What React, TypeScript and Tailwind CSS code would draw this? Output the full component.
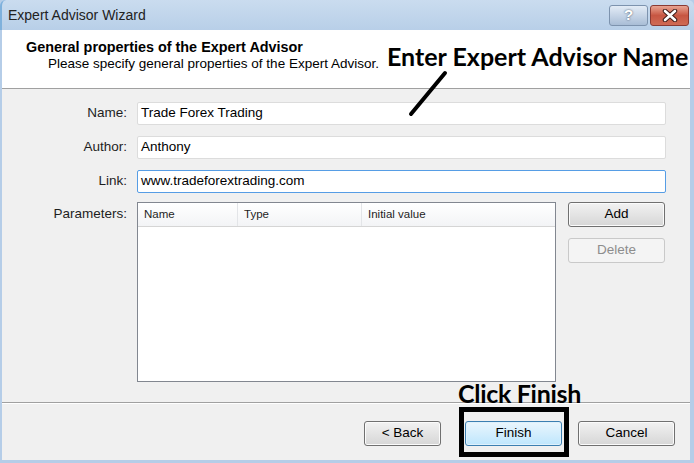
import React from "react";

const fieldRows = [
  { label: "Name:", value: "Trade Forex Trading", focused: false },
  { label: "Author:", value: "Anthony", focused: false },
  { label: "Link:", value: "www.tradeforextrading.com", focused: true },
];

const WinButton = ({
  children,
  width,
  primary,
  disabled,
}: {
  children: React.ReactNode;
  width: string;
  primary?: boolean;
  disabled?: boolean;
}) => {
  const base =
    "h-[25px] rounded-[3px] border flex items-center justify-center text-[13.5px] ";
  const look = disabled
    ? "border-[#c9c9c9] bg-[#f4f4f4] text-[#8d8d8d]"
    : primary
      ? "border-[#3c7fb1] bg-gradient-to-b from-[#eaf6fd] to-[#bee6fd] text-black shadow-[inset_0_0_0_1px_#dff1fc]"
      : "border-[#707070] bg-gradient-to-b from-[#f2f2f2] to-[#d6d6d6] text-black shadow-[inset_0_0_0_1px_#fbfbfb]";
  return <div className={base + width + " " + look}>{children}</div>;
};

const App = () => {
  return (
    <div className="relative w-[694px] h-[463px] bg-[#b5cde8] font-['Liberation_Sans',Arial,sans-serif] overflow-hidden flex flex-col">
      {/* title bar */}
      <div className="h-[30px] flex items-center justify-between pl-[6px] pr-[5px] bg-gradient-to-b from-[#cadcef] to-[#b8cfe8] rounded-t-[6px] border-l-2 border-[#7fb1dc]">
        <span className="text-[14px] text-[#222222]">Expert Advisor Wizard</span>
        <div className="flex gap-[2px] self-start mt-[5px]">
          <div className="w-[39px] h-[21px] rounded-[3px] border border-[#7d93ae] bg-gradient-to-b from-[#e3ecf6] to-[#a9bdd6] flex items-center justify-center text-white font-bold text-[15px] [text-shadow:0_0_2px_#3a4a5e]">
            ?
          </div>
          <div className="w-[39px] h-[21px] rounded-[3px] border border-[#8a3a33] bg-gradient-to-b from-[#e8a493] via-[#c75642] to-[#cf6a55] flex items-center justify-center">
            <svg width="16" height="13" viewBox="0 0 16 13">
              <path
                d="M3 2 L13 11 M13 2 L3 11"
                stroke="#3b1a16"
                strokeWidth="4.5"
                strokeLinecap="round"
              />
              <path
                d="M3 2 L13 11 M13 2 L3 11"
                stroke="#ffffff"
                strokeWidth="2.6"
                strokeLinecap="round"
              />
            </svg>
          </div>
        </div>
      </div>

      {/* client area */}
      <div className="flex-1 flex flex-col ml-[2px] mr-[4px] mb-[3px] bg-[#f0f0f0] text-[13.5px] text-black">
        {/* header */}
        <div className="h-[59px] bg-white border-b border-[#a0a0a0] pl-[24px] pt-[9px]">
          <div className="font-bold text-[14.4px] leading-[17px]">General properties of the Expert Advisor</div>
          <div className="pl-[22px] leading-[16px]">Please specify general properties of the Expert Advisor.</div>
        </div>

        {/* form */}
        <div className="flex-1 flex flex-col pt-[13px] pr-[24px]">
          {fieldRows.map((row, i) => (
            <div key={row.label} className={"flex items-center " + (i === 0 ? "" : "mt-[11px]")}>
              <div className="w-[125px] text-right text-[#1e1e1e]">{row.label}</div>
              <div
                className={
                  "ml-[10px] flex-1 h-[23px] bg-white border rounded-[2px] flex items-center px-[3px] " +
                  (row.focused ? "border-[#569de5]" : "border-[#dcdcdc]")
                }
              >
                {row.value}
              </div>
            </div>
          ))}

          <div className="flex mt-[9px]">
            <div className="w-[125px] text-right text-[#1e1e1e] pt-[2px]">Parameters:</div>
            <div className="ml-[10px] w-[419px] h-[180px] bg-white border border-[#828790] flex flex-col">
              <div className="h-[24px] flex bg-gradient-to-b from-white to-[#f3f4f6] border-b border-[#d5d5d5] text-[11.5px] text-[#1e1e1e]">
                <div className="w-[100px] border-r border-[#e3e5e8] pl-[6px] flex items-center">Name</div>
                <div className="w-[124px] border-r border-[#e3e5e8] pl-[6px] flex items-center">Type</div>
                <div className="flex-1 pl-[6px] flex items-center">Initial value</div>
              </div>
            </div>
            <div className="ml-[12px] flex flex-col gap-[11px]">
              <WinButton width="w-[97px]">Add</WinButton>
              <WinButton width="w-[97px]" disabled>
                Delete
              </WinButton>
            </div>
          </div>
        </div>

        {/* footer */}
        <div className="h-[58px] border-t border-[#a0a0a0] shadow-[inset_0_1px_0_#ffffff] flex justify-end items-start pt-[18px] pr-[15px]">
          <WinButton width="w-[77px]">&lt; Back</WinButton>
          <div className="ml-[24px]">
            <WinButton width="w-[97px]" primary>
              Finish
            </WinButton>
          </div>
          <div className="ml-[16px]">
            <WinButton width="w-[97px]">Cancel</WinButton>
          </div>
        </div>
      </div>

      {/* annotations */}
      <div className="absolute left-[387px] top-[41px] text-[25px] font-bold font-['Lato',sans-serif] leading-[30px] text-black">
        Enter Expert Advisor Name
      </div>
      <svg className="absolute left-0 top-0" width="694" height="463">
        <line x1="445" y1="73" x2="411" y2="114" stroke="black" strokeWidth="4" strokeLinecap="round" />
      </svg>
      <div className="absolute left-[458px] top-[378px] text-[25px] font-bold font-['Lato',sans-serif] leading-[30px] text-black tracking-[-0.3px]">
        Click Finish
      </div>
      <div className="absolute left-[459px] top-[407px] w-[110px] h-[50px] border-[5px] border-black" />
    </div>
  );
};

export default App;
